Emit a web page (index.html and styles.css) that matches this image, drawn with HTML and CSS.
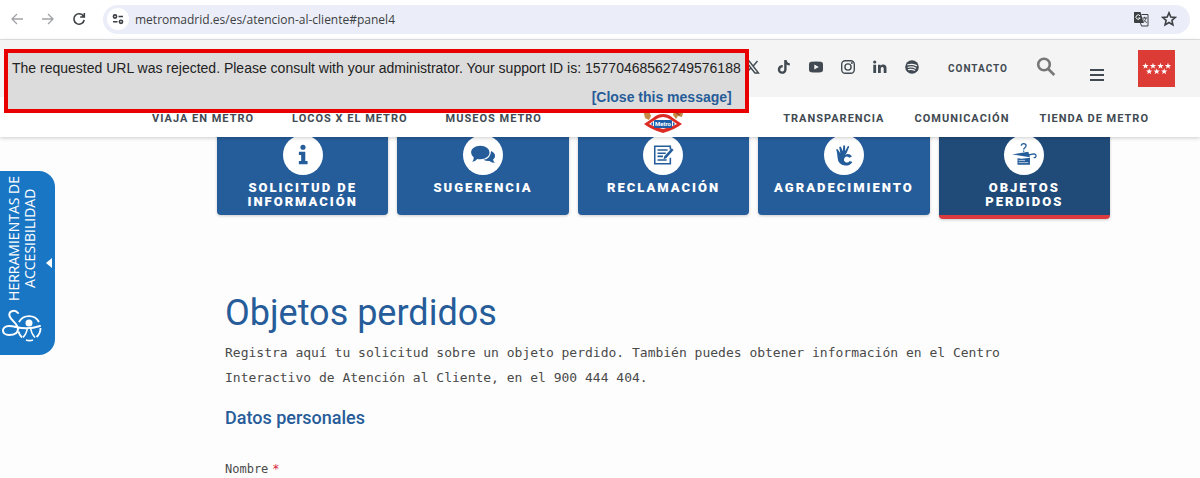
FILE: index.html
```html
<!DOCTYPE html>
<html lang="es">
<head>
    <meta charset="UTF-8">
    <meta name="viewport" content="width=device-width, initial-scale=1.0">
    <title>Objetos perdidos</title>
    <link rel="stylesheet" href="styles.css">
</head>
<body>
    <div class="browser-bar">
        <button class="bar-btn muted" aria-label="Back"><svg width="14" height="14" viewBox="0 0 14 14"><path d="M13 7H2M7 2L2 7l5 5"/></svg></button>
        <button class="bar-btn muted" aria-label="Forward"><svg width="14" height="14" viewBox="0 0 14 14"><path d="M1 7h11M7 2l5 5-5 5"/></svg></button>
        <button class="bar-btn" aria-label="Reload"><svg width="14" height="14" viewBox="0 0 14 14"><path d="M11.5 4.2A5.2 5.2 0 1 0 12.2 8M12.3 1v4H8.2"/></svg></button>
        <div class="address">
            <button class="site-info" aria-label="Site information"><svg width="14" height="14" viewBox="0 0 14 14"><circle cx="4" cy="4.5" r="1.6"/><path d="M7.5 4.5H12M2 9.8h4.5"/><circle cx="10" cy="9.8" r="1.6"/></svg></button>
            <input class="url" type="text" value="metromadrid.es/es/atencion-al-cliente#panel4" aria-label="Address">
            <button class="bar-btn" aria-label="Translate"><svg width="16" height="16" viewBox="0 0 16 16"><path class="solid" d="M1 1h6.5l3.200 11H2a1 1 0 0 1-1-1z"/><path class="g" d="M7 4.800A2.200 2.200 0 1 0 7.200 7H5.300"/><path class="thin" d="M8.500 3.500H15V15H8.500l-1-3M9.500 7h4.500M11.600 5.800V7M13 7c-.5 2-1.700 3.500-3 4.500M10.500 8.500c.7 1.300 2 2.500 3.300 3"/></svg></button>
            <button class="bar-btn" aria-label="Bookmark"><svg width="16" height="16" viewBox="0 0 16 16"><path d="M8 1.800l1.800 4.200 4.500.4-3.400 3 1 4.500L8 11.500l-3.900 2.400 1-4.500-3.400-3 4.500-.4z"/></svg></button>
        </div>
    </div>

    <header class="header">
        <div class="top-row">
            <ul class="social">
                <li><a href="#" aria-label="X"><svg viewBox="0 0 16 16"><path class="line" d="M1.500 2h3.600l9.400 12h-3.600zM13.500 2L9 7.200M6.800 9L2.200 14"/></svg></a></li>
                <li><a href="#" aria-label="TikTok"><svg viewBox="0 0 16 16"><path d="M8.200 1h2.400c.2 1.900 1.300 3 3.200 3.200v2.400c-1.200 0-2.300-.4-3.200-1v4.900a4.400 4.400 0 1 1-3.900-4.400v2.500a2 2 0 1 0 1.500 1.900z"/></svg></a></li>
                <li><a href="#" aria-label="YouTube"><svg viewBox="0 0 16 16"><path fill-rule="evenodd" d="M3 2.800Q8 2.300 13 2.800q2 .2 2 2.200v6q0 2-2 2.200-5 .5-10 0-2-.2-2-2.200V5q0-2 2-2.200zM6.300 5.400v5.200L10.800 8z"/></svg></a></li>
                <li><a href="#" aria-label="Instagram"><svg viewBox="0 0 16 16"><rect class="line" x="1.700" y="1.700" width="12.600" height="12.600" rx="3.500"/><circle class="line" cx="8" cy="8" r="3.100"/><circle cx="11.900" cy="4.100" r="1"/></svg></a></li>
                <li><a href="#" aria-label="LinkedIn"><svg viewBox="0 0 16 16"><circle cx="2.700" cy="3" r="1.600"/><path d="M1.300 5.700h2.800V14H1.300zM6 5.700h2.600v1.200c1.500-2.400 5.900-1.900 5.900 2V14h-2.800V9.700c0-2.600-2.900-2.200-2.900 0V14H6z"/></svg></a></li>
                <li><a href="#" aria-label="Spotify"><svg viewBox="0 0 16 16"><circle cx="8" cy="8" r="6.800"/><path d="M3.800 5.800c3-.9 6-.6 8.700.8M4.200 8.300c2.600-.8 5.200-.4 7.400.8M4.600 10.600c2.200-.6 4.200-.3 6 .7" fill="none" stroke="#f4f4f4" stroke-width="1.200" stroke-linecap="round"/></svg></a></li>
            </ul>
            <a class="contact" href="#">CONTACTO</a>
            <button class="search" aria-label="Buscar"><svg width="20" height="20" viewBox="0 0 20 20"><circle cx="8" cy="7.500" r="5.800"/><path d="M12.300 12l6 6"/></svg></button>
            <button class="menu" aria-label="Menú"><svg width="14" height="14" viewBox="0 0 14 14"><path d="M0 2h14M0 7h14M0 12h14"/></svg></button>
            <a class="community" href="#" aria-label="Comunidad de Madrid"><svg width="37" height="37" viewBox="0 0 37 37"><defs><path id="star" d="M0-3.300L.8-1h2.400L1.300.4 2 2.700 0 1.300l-2 1.400.7-2.300L-3.200-1h2.400z"/></defs><use href="#star" x="7.500" y="16"/><use href="#star" x="15" y="16"/><use href="#star" x="22.500" y="16"/><use href="#star" x="30" y="16"/><use href="#star" x="11.200" y="21.500"/><use href="#star" x="18.700" y="21.500"/><use href="#star" x="26.200" y="21.500"/></svg></a>
        </div>
        <nav class="main-nav">
            <div class="nav-group">
                <a href="#">VIAJA EN METRO</a>
                <a href="#">LOCOS X EL METRO</a>
                <a href="#">MUSEOS METRO</a>
            </div>
            <a class="logo" href="#" aria-label="Metro"><svg width="42" height="36" viewBox="0 0 42 36">
                <path d="M1 10h5l3 7-2 4-4-2z" fill="#c58a43"/>
                <path d="M32 10l5 1 4 3-1 4-4-1-2 3-3-4z" fill="#c58a43"/>
                <path d="M34 14l4 2M36 11l3 3" stroke="#a34b2a" stroke-width="1.500"/>
                <path d="M21 15q6 0 10 4l9 6q-8 6-19 9Q10 31 2 25l9-6q4-4 10-4z" fill="#dc2b24"/>
                <path d="M21 18q4 0 8 3l6 4q-7 4-14 5-7-1-14-5l6-4q4-3 8-3z" fill="#fff"/>
                <rect x="12" y="21" width="18" height="8" rx="1" fill="#1f5fa9"/>
                <path d="M11 23l-2 2 2 2zM31 23l2 2-2 2z" fill="#1f5fa9"/>
                <text class="logo-text" x="21" y="27" text-anchor="middle">Metro</text>
            </svg></a>
            <div class="nav-group right">
                <a href="#">TRANSPARENCIA</a>
                <a href="#">COMUNICACIÓN</a>
                <a href="#">TIENDA DE METRO</a>
            </div>
        </nav>
    </header>

    <div class="notice" role="alert">
        <p>The requested URL was rejected. Please consult with your administrator. Your support ID is: 15770468562749576188</p>
        <a href="#">[Close this message]</a>
    </div>

    <button class="accessibility">
        <span class="accessibility-label">HERRAMIENTAS DE<br>ACCESIBILIDAD</span>
        <svg class="accessibility-icon" width="42" height="34" viewBox="0 0 42 34" fill="none" stroke="#fff" stroke-width="2">
            <path d="M17 4C14 0 6 2 9 8c2 4 8 7 8 12s-5 6-9 6c-8 0-8-9 0-9q3 0 7 1 12 3 24-1" stroke-linecap="round"/>
            <path d="M18 13a11.500 11.500 0 0 1 20 0M39.500 19a11.500 11.500 0 0 1-4 9M32 31a11.500 11.500 0 0 1-7 0M21 28.500q-3-3-3.500-6" stroke-width="1.800"/>
            <circle cx="28" cy="14" r="3.500" fill="#fff" stroke="none"/>
            <path d="M26.500 19q-1 6-4.500 9.500M29.500 19q1 6 4.500 9.500" stroke-width="1.500"/>
        </svg>
        <svg class="accessibility-arrow" width="6" height="10" viewBox="0 0 6 10"><path d="M6 0v10L0 5z" fill="#fff"/></svg>
    </button>

    <main class="content">
        <div class="tabs">
            <a class="tab" href="#panel0">
                <span class="tab-icon"><svg viewBox="0 0 24 24"><circle cx="12" cy="3.500" r="2.800"/><path d="M7.500 8.500h7v10h2.500V22H7.500v-3.500h2.500v-6.500H7.500z"/></svg></span>
                SOLICITUD DE INFORMACIÓN
            </a>
            <a class="tab" href="#panel1">
                <span class="tab-icon"><svg class="wide" viewBox="0 0 24 24"><path d="M9.500 3.500c5 0 8.500 2.700 8.500 6.300S14.500 16 9.500 16q-1.500 0-2.800-.3Q5 18 2 18.200q1.500-2 1.500-4Q1 12.500 1 9.800c0-3.600 3.500-6.300 8.500-6.300zM19.500 8.200c4.500 2 4.500 6 1.800 8q.1 1.500 1.700 3-3 0-5-1.700-3.300.3-5.500-1.100 6.500-1 7-8.200z"/></svg></span>
                SUGERENCIA
            </a>
            <a class="tab" href="#panel2">
                <span class="tab-icon"><svg viewBox="0 0 24 24"><path class="line" d="M20 6V2.500H3v19h17V15M6 6.500h11M6 10h9M6 13.500h6M6 17.500h10"/><path d="M23.500 6.500L15.500 15.500l-3 1 .8-3L21.500 4.500z"/></svg></span>
                RECLAMACIÓN
            </a>
            <a class="tab" href="#panel3">
                <span class="tab-icon"><svg viewBox="0 0 24 24"><path d="M3.500 6q1-1 2 .2L8 10 6.800 3.500q.8-1.500 1.900-.2L10.700 8l.5-6q1-1.500 2 0l.1 6L16 2.500q1.200-1 1.700.5L15 9.500q-1 1.500-2.300 2.500 5-2.500 8 1.500l-3 1.500q-2.500-2.500-5 0-2 3 1 5 3 1 4.500-1.500l3 1Q18.500 24 13 23.500 5.500 22.500 5 15q-.2-5-1.500-9z"/></svg></span>
                AGRADECIMIENTO
            </a>
            <a class="tab active" href="#panel4">
                <span class="tab-icon"><svg class="wide" viewBox="0 0 24 24"><path d="M1 11.500l15-2.500 1.500 5zM6 15l4 .5 7.500-1V21H6z"/><path class="line thin" d="M9.500 3.500q0-2 2.200-2t2.200 2q0 1-1.100 1.800T11.700 7M11.700 7.800v1.200M16 12l5-1q2.500 0 2 2.500-.7 1.500-2 .5"/><path d="M7 17h6M7 19h9" stroke="#fff" stroke-width=".6"/></svg></span>
                OBJETOS PERDIDOS
            </a>
        </div>

        <section class="panel">
            <h1>Objetos perdidos</h1>
            <p>Registra aquí tu solicitud sobre un objeto perdido. También puedes obtener información en el Centro Interactivo de Atención al Cliente, en el 900 444 404.</p>
            <form>
                <h2>Datos personales</h2>
                <label for="nombre">Nombre<span class="required">*</span></label>
                <input class="field" id="nombre" type="text" required>
            </form>
        </section>
    </main>
</body>
</html>
```
FILE: styles.css
```css
* {
    box-sizing: border-box;
}

body {
    display: flex;
    flex-direction: column;
    position: relative;
    height: 100vh;
    margin: 0;
    background-color: #fdfdfd;
    font-family: Roboto, sans-serif;
    color: #414a52;
}

a {
    color: inherit;
    text-decoration: none;
}

button {
    padding: 0;
    border: none;
    background: none;
    color: inherit;
    cursor: pointer;
}

svg {
    display: block;
}

/* Browser bar */
.browser-bar {
    display: flex;
    flex-shrink: 0;
    align-items: center;
    gap: 17px;
    height: 40px;
    padding: 0 10px 1px;
    background-color: #fff;
    border-bottom: 1px solid #e2e4e8;
}

.bar-btn svg,
.site-info svg {
    fill: none;
    stroke: #3c4043;
    stroke-width: 1.6;
}

.bar-btn.muted svg {
    stroke: #a0a2a5;
    stroke-width: 1.3;
}

.bar-btn .solid {
    fill: #3c4043;
    stroke: none;
}

.bar-btn .g {
    stroke: #fff;
    stroke-width: 1;
}

.bar-btn .thin {
    stroke-width: 1;
}

.address {
    display: flex;
    flex: 1;
    align-items: center;
    gap: 12px;
    height: 29px;
    padding: 0 13px 0 4px;
    border-radius: 15px;
    background-color: #ebeef8;
}

.site-info {
    display: flex;
    align-items: center;
    justify-content: center;
    width: 22px;
    height: 22px;
    border-radius: 50%;
    background-color: #fff;
}

.url {
    flex: 1;
    min-width: 0;
    padding: 0;
    margin-left: -6px;
    border: none;
    background: none;
    font: 12px "Open Sans", sans-serif;
    color: #3c4043;
}

/* Header */
.header {
    position: relative;
    z-index: 1;
    flex-shrink: 0;
    background-color: #fff;
    box-shadow: 0 1px 4px rgba(0, 0, 0, 0.2);
}

.top-row {
    display: flex;
    align-items: center;
    justify-content: flex-end;
    gap: 28px;
    height: 57px;
    padding: 0 25px;
    background-color: #f4f4f4;
}

.social {
    display: flex;
    gap: 16px;
    margin: 0;
    padding: 0 0 3px;
    list-style: none;
}

.social svg {
    width: 16px;
    height: 16px;
    fill: currentColor;
}

.social .line {
    fill: none;
    stroke: currentColor;
    stroke-width: 1.4;
}

.contact {
    font-size: 10px;
    font-weight: 700;
    letter-spacing: 1px;
}

.search {
    padding-bottom: 3px;
}

.search svg {
    fill: none;
    stroke: #777;
    stroke-width: 2.6;
}

.menu {
    margin: 0 6px;
    padding-top: 12px;
}

.menu svg {
    stroke: #414a52;
    stroke-width: 2;
}

.community svg {
    background-color: #dc3b36;
    fill: #fff;
}

.main-nav {
    display: flex;
    align-items: center;
    justify-content: space-between;
    height: 40px;
    padding: 0 51px 0 152px;
    font-size: 11px;
    font-weight: 700;
    letter-spacing: 1px;
}

.nav-group {
    display: flex;
    gap: 38px;
    padding-top: 3px;
}

.nav-group.right {
    gap: 30px;
}

.logo-text {
    font: 700 6px Roboto, sans-serif;
    letter-spacing: 0;
    fill: #fff;
}

/* Rejected request message, drawn over the header */
.notice {
    position: absolute;
    z-index: 2;
    top: 49px;
    left: 4px;
    height: 64px;
    padding: 7px 4px 0;
    border: 4px solid #e80000;
    background-color: #dcdcdc;
    font: 14px/16px "Liberation Sans", Arial, sans-serif;
    color: #222;
}

.notice p {
    margin: 0 0 13px;
}

.notice a {
    display: block;
    padding-right: 9px;
    text-align: right;
    font-weight: 700;
    color: #265c99;
}

/* Accessibility tab */
.accessibility {
    position: absolute;
    z-index: 1;
    top: 171px;
    left: 0;
    width: 55px;
    height: 184px;
    border-radius: 0 16px 16px 0;
    background-color: #1976c5;
    color: #fff;
}

.accessibility-label {
    position: absolute;
    top: 5px;
    left: 6px;
    writing-mode: vertical-rl;
    transform: rotate(180deg);
    font: 14px/16px "Open Sans", sans-serif;
    text-align: center;
}

.accessibility-icon {
    position: absolute;
    left: 1px;
    bottom: 12px;
}

.accessibility-arrow {
    position: absolute;
    top: 87px;
    right: 3px;
}

/* Page content */
.content {
    flex: 1;
    min-height: 0;
    padding: 0 90px 0 217px;
    overflow: hidden;
}

.tabs {
    display: grid;
    grid-template-columns: repeat(5, minmax(0, 1fr));
    gap: 9px;
    align-items: start;
    margin-top: -12px;
}

.tab {
    display: flex;
    flex-direction: column;
    align-items: center;
    gap: 6px;
    height: 90px;
    padding: 10px 12px 0;
    border-radius: 4px;
    background-color: #255d9b;
    box-shadow: 0 1px 3px rgba(0, 0, 0, 0.2);
    color: #fff;
    font-size: 13px;
    font-weight: 900;
    line-height: 14px;
    letter-spacing: 2px;
    text-align: center;
}

.tab.active {
    height: 94px;
    border-bottom: 4px solid #dc3b40;
    background-color: #204b79;
}

.tab-icon {
    display: flex;
    flex-shrink: 0;
    align-items: center;
    justify-content: center;
    width: 40px;
    height: 40px;
    border-radius: 50%;
    background-color: #fff;
    color: #255d9b;
}

.tab-icon svg {
    width: 22px;
    height: 22px;
    fill: currentColor;
}

.tab-icon .wide {
    width: 26px;
    height: 26px;
}

.tab-icon .line {
    fill: none;
    stroke: currentColor;
    stroke-width: 1.7;
}

.tab-icon .thin {
    stroke-width: 1.2;
}

.panel {
    padding: 72px 86px 0 8px;
}

.panel h1 {
    margin: 0;
    font-size: 36px;
    font-weight: 400;
    line-height: 44px;
    color: #265c99;
}

.panel p {
    margin: 5px 0 16px;
    font: 13px/25px "DejaVu Sans Mono", monospace;
    color: #4a4a4a;
}

.panel h2 {
    margin: 0 0 29px;
    font-size: 18px;
    font-weight: 500;
    line-height: 24px;
    color: #265c99;
}

.panel label {
    display: block;
    font: 12px/20px "DejaVu Sans Mono", monospace;
    color: #4a4a4a;
}

.required {
    margin-left: 4px;
    color: #d9223a;
}

.field {
    width: 50%;
    height: 36px;
    margin-top: 8px;
    border: 1px solid #ccc;
}
```
